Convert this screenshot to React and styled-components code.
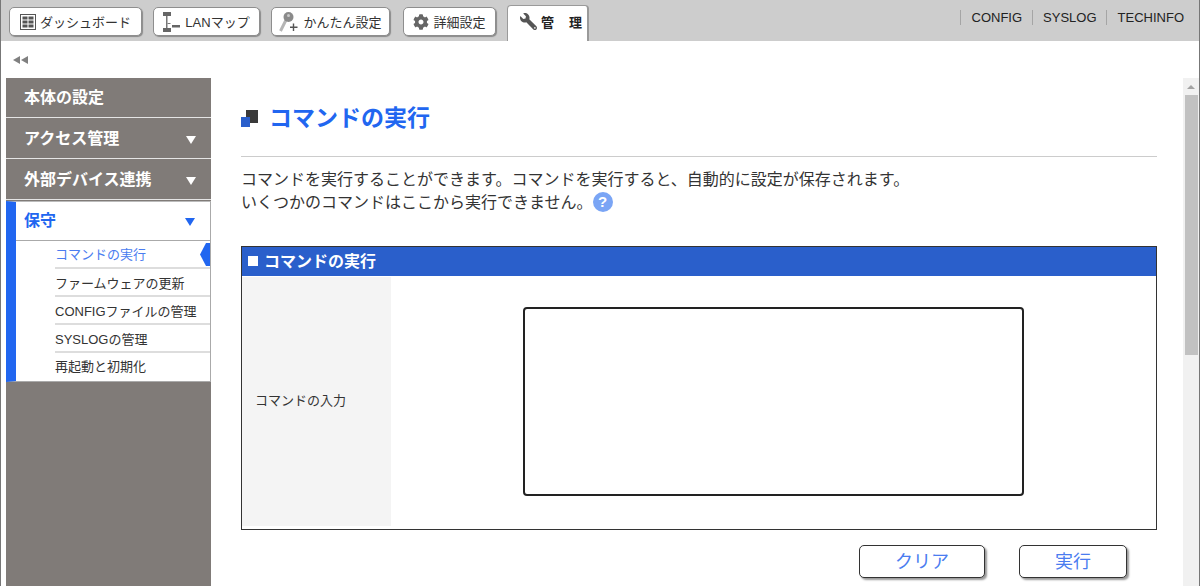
import React from 'react'
import styled, { createGlobalStyle } from 'styled-components'
import { FaCog, FaWrench } from 'react-icons/fa'

const GlobalStyle = createGlobalStyle`
  html, body {
    margin: 0;
    padding: 0;
    height: 100%;
    overflow: hidden;
    background: #fff;
  }
  body {
    font-family: "Liberation Sans", "Noto Sans CJK JP", sans-serif;
    color: #333;
  }
`

const Page = styled.div`
  width: 1200px;
  height: 586px;
  box-sizing: border-box;
  display: flex;
  flex-direction: column;
  border-left: 1px solid #777;
  border-right: 1px solid #777;
  overflow: hidden;
`

const Header = styled.header`
  height: 41px;
  flex: none;
  background: #cdcdcd;
  display: flex;
  justify-content: space-between;
  box-sizing: border-box;
  padding-left: 8px;
`

const Tabs = styled.nav`
  display: flex;
  align-items: flex-start;
  gap: 11px;
  padding-top: 7px;
`

const Tab = styled.a`
  height: 29px;
  width: ${(p) => p.$w}px;
  margin-left: ${(p) => p.$ml || 0}px;
  box-sizing: border-box;
  display: flex;
  align-items: center;
  justify-content: center;
  gap: 4px;
  background: #fff;
  border: 1px solid #8e8e8e;
  border-radius: 5px;
  box-shadow: 1px 1px 1px #8a8a8a;
  font-size: 13px;
  color: #333;
  white-space: nowrap;
`

const ActiveTab = styled.a`
  width: 82px;
  height: 36px;
  box-sizing: border-box;
  margin-top: -2px;
  display: flex;
  align-items: center;
  gap: 4px;
  padding: 0 0 5px 12px;
  background: #fff;
  border: 1px solid #9a9a9a;
  border-bottom: none;
  border-right: 2px solid #9a9a9a;
  border-radius: 4px 4px 0 0;
  font-size: 13px;
  letter-spacing: 1px;
  font-weight: bold;
  color: #222;
  white-space: pre;
  svg {
    color: #555;
    transform: scaleX(-1);
  }
`

const Links = styled.div`
  display: flex;
  align-items: flex-start;
  padding: 10px 15px 0 0;
`

const HeadLink = styled.a`
  font-size: 13px;
  line-height: 15px;
  color: #222;
  border-left: 1px solid #a5a5a5;
  padding-left: ${(p) => p.$pad}px;
  margin-left: ${(p) => p.$gap}px;
`

const Body = styled.div`
  flex: 1;
  display: flex;
  flex-direction: column;
  min-height: 0;
`

const CollapseRow = styled.div`
  height: 37px;
  flex: none;
  display: flex;
  align-items: center;
  padding-left: 12px;
  box-sizing: border-box;
`

const Content = styled.div`
  flex: 1;
  display: flex;
  min-height: 0;
`

const Sidebar = styled.aside`
  width: 205px;
  margin-left: 5px;
  flex: none;
  background: #807b78;
  display: flex;
  flex-direction: column;
`

const SideHead = styled.div`
  height: 40px;
  box-sizing: border-box;
  border-bottom: 1px solid #e5e5e5;
  margin-bottom: 1px;
  padding: 0 15px 4px 18px;
  display: flex;
  align-items: center;
  justify-content: space-between;
  font-size: 16px;
  font-weight: bold;
  color: #fff;
`

const Arrow = styled.span`
  width: 0;
  height: 0;
  border-left: 5px solid transparent;
  border-right: 5px solid transparent;
  border-top: 8px solid ${(p) => p.$color || '#fff'};
  margin-top: 6px;
`

const OpenGroup = styled.div`
  background: #fff;
  border-left: 10px solid #2166f0;
  border-right: 1px solid #aaa;
  border-bottom: 1px solid #aaa;
  border-top: 1px solid #bbb;
  margin-bottom: 1px;
`

const OpenHead = styled.div`
  height: 39px;
  box-sizing: border-box;
  padding: 0 15px 4px 8px;
  display: flex;
  align-items: center;
  justify-content: space-between;
  border-bottom: 1px solid #aaa;
  font-size: 16px;
  font-weight: bold;
  color: #2166f0;
`

const SubItem = styled.a`
  position: relative;
  display: flex;
  align-items: center;
  height: 28px;
  box-sizing: border-box;
  margin-left: 39px;
  padding-bottom: ${(p) => (p.$last ? 4 : p.$active ? 1 : 0)}px;
  font-size: 13px;
  color: ${(p) => (p.$active ? '#4a7cf0' : '#333')};
  border-bottom: ${(p) => (p.$last ? 'none' : '2px solid #ddd')};
`

const Pointer = styled.span`
  position: absolute;
  right: 0;
  top: 2px;
  width: 10px;
  height: 23px;
  background: #2166f0;
  clip-path: polygon(100% 0, 100% 100%, 60% 100%, 0 50%, 60% 0);
`

const Main = styled.main`
  flex: 1;
  min-width: 0;
  padding-left: 30px;
  overflow: hidden;
`

const TitleRow = styled.div`
  height: 79px;
  width: 916px;
  box-sizing: border-box;
  display: flex;
  align-items: center;
  padding-bottom: 3px;
  border-bottom: 1px solid #ccc;
  gap: 11px;
`

const TitleIcon = styled.svg`
  width: 17px;
  height: 17px;
  flex: none;
  margin-top: 6px;
`

const Title = styled.h1`
  margin: 0;
  font-size: 23px;
  font-weight: 700;
  color: #2166f0;
`

const Desc = styled.p`
  margin: 11px 0 0;
  font-size: 16px;
  line-height: 23px;
  color: #333;
`

const Help = styled.span`
  display: inline-flex;
  align-items: center;
  justify-content: center;
  width: 20px;
  height: 20px;
  border-radius: 50%;
  background: #7aa5f5;
  color: #fff;
  font-size: 15px;
  font-weight: bold;
  vertical-align: 1px;
`

const Panel = styled.section`
  margin-top: 32px;
  border: 1px solid #333;
  width: 916px;
  height: 284px;
  box-sizing: border-box;
`

const PanelHead = styled.div`
  height: 29px;
  box-sizing: border-box;
  background: #2a5fcb;
  color: #fff;
  font-size: 16px;
  font-weight: bold;
  display: flex;
  align-items: center;
  gap: 6px;
  padding: 0 0 4px 6px;
  margin-bottom: 1px;
`

const Square = styled.span`
  width: 10px;
  height: 10px;
  margin-top: 3px;
  background: #fff;
`

const PanelRow = styled.div`
  display: flex;
  height: 249px;
`

const RowLabel = styled.div`
  width: 149px;
  flex: none;
  background: #f4f4f4;
  box-sizing: border-box;
  padding: 0 0 4px 13px;
  display: flex;
  align-items: center;
  font-size: 13px;
  color: #333;
`

const RowField = styled.div`
  flex: 1;
  display: flex;
  padding: 30px 0 0 132px;
  box-sizing: border-box;
`

const CommandInput = styled.textarea`
  width: 501px;
  height: 189px;
  flex: none;
  box-sizing: border-box;
  border: 2px solid #222;
  border-radius: 4px;
  resize: none;
  outline: none;
  background: #fff;
`

const Actions = styled.div`
  display: flex;
  gap: 34px;
  margin-top: 15px;
  padding-left: 618px;
`

const Btn = styled.button`
  width: ${(p) => p.$w}px;
  height: 33px;
  box-sizing: border-box;
  background: #fff;
  border: 1px solid #333;
  border-radius: 5px;
  box-shadow: 2px 2px 2px #999;
  font-family: inherit;
  font-size: 18px;
  color: #4a7cf0;
  padding: 0 0 3px;
`

const Scrollbar = styled.div`
  width: 16px;
  flex: none;
  background: #f1f1f1;
  display: flex;
  flex-direction: column;
  align-items: center;
`

const ScrollUp = styled.span`
  width: 0;
  height: 0;
  margin-top: 7px;
  border-left: 4px solid transparent;
  border-right: 4px solid transparent;
  border-bottom: 4px solid #a3a3a3;
`

const ScrollThumb = styled.div`
  width: 13px;
  height: 260px;
  margin-top: 6px;
  background: #c1c1c1;
`

const DashboardIcon = () => (
  <svg width="16" height="16" viewBox="0 0 16 16">
    <rect x="0.5" y="0.5" width="15" height="15" fill="#fff" stroke="#555" />
    <rect x="2.5" y="2.5" width="5" height="3" fill="#555" />
    <rect x="8.5" y="2.5" width="5" height="3" fill="#555" />
    <rect x="2.5" y="6.5" width="5" height="3" fill="#555" />
    <rect x="8.5" y="6.5" width="5" height="3" fill="#555" />
    <rect x="2.5" y="10.5" width="5" height="3" fill="#555" />
    <rect x="8.5" y="10.5" width="5" height="3" fill="#555" />
  </svg>
)

const MapIcon = () => (
  <svg width="18" height="20" viewBox="0 0 18 20">
    <rect x="0" y="0" width="8" height="4" fill="#666" />
    <rect x="0" y="16" width="8" height="4" fill="#666" />
    <rect x="3" y="4" width="1.5" height="12" fill="#777" />
    <rect x="4.5" y="11" width="3" height="1" fill="#777" />
    <rect x="9" y="13" width="8" height="2.5" fill="#666" />
  </svg>
)

const KeyIcon = () => (
  <svg width="20" height="20" viewBox="0 0 20 20">
    <path d="M1.5 19 L7 8" stroke="#b5b5b5" strokeWidth="3" fill="none" />
    <circle cx="9.5" cy="5" r="5" fill="#8a8a8a" />
    <circle cx="9.5" cy="3.5" r="1.5" fill="#c9c9c9" />
    <path d="M14.5 11.5 V19 M11 15.2 H18.5" stroke="#555" strokeWidth="1.4" fill="none" />
  </svg>
)

const CollapseIcon = () => (
  <svg width="16" height="8" viewBox="0 0 16 8">
    <path d="M0 4 L7 0 V8 Z M8 4 L15 0 V8 Z" fill="#808080" />
  </svg>
)

const subItems = [
  'コマンドの実行',
  'ファームウェアの更新',
  'CONFIGファイルの管理',
  'SYSLOGの管理',
  '再起動と初期化',
]

export default function App() {
  return (
    <Page>
      <GlobalStyle />
      <Header>
        <Tabs>
          <Tab $w={133}><DashboardIcon />ダッシュボード</Tab>
          <Tab $w={107}><MapIcon />LANマップ</Tab>
          <Tab $w={119}><KeyIcon />かんたん設定</Tab>
          <Tab $w={93} $ml={2}><FaCog size={16} color="#666" />詳細設定</Tab>
          <ActiveTab><FaWrench size={17} />管　理</ActiveTab>
        </Tabs>
        <Links>
          <HeadLink $pad={11} $gap={0}>CONFIG</HeadLink>
          <HeadLink $pad={10} $gap={10}>SYSLOG</HeadLink>
          <HeadLink $pad={11} $gap={9}>TECHINFO</HeadLink>
        </Links>
      </Header>
      <Body>
        <CollapseRow><CollapseIcon /></CollapseRow>
        <Content>
          <Sidebar>
            <SideHead>本体の設定</SideHead>
            <SideHead>アクセス管理<Arrow /></SideHead>
            <SideHead>外部デバイス連携<Arrow /></SideHead>
            <OpenGroup>
              <OpenHead>保守<Arrow $color="#2166f0" /></OpenHead>
              {subItems.map((item, i) => (
                <SubItem key={item} $active={i === 0} $last={i === subItems.length - 1}>
                  {item}
                  {i === 0 && <Pointer />}
                </SubItem>
              ))}
            </OpenGroup>
          </Sidebar>
          <Main>
            <TitleRow>
              <TitleIcon viewBox="0 0 17 17">
                <rect x="5" y="0" width="12" height="13" fill="#3a3a3a" />
                <rect x="0" y="7" width="9" height="10" fill="#2a5fcb" />
              </TitleIcon>
              <Title>コマンドの実行</Title>
            </TitleRow>
            <Desc>
              コマンドを実行することができます。コマンドを実行すると、自動的に設定が保存されます。
              <br />
              いくつかのコマンドはここから実行できません。
              <Help>?</Help>
            </Desc>
            <Panel>
              <PanelHead><Square />コマンドの実行</PanelHead>
              <PanelRow>
                <RowLabel>コマンドの入力</RowLabel>
                <RowField><CommandInput /></RowField>
              </PanelRow>
            </Panel>
            <Actions>
              <Btn $w={126}>クリア</Btn>
              <Btn $w={108}>実行</Btn>
            </Actions>
          </Main>
          <Scrollbar>
            <ScrollUp />
            <ScrollThumb />
          </Scrollbar>
        </Content>
      </Body>
    </Page>
  )
}
